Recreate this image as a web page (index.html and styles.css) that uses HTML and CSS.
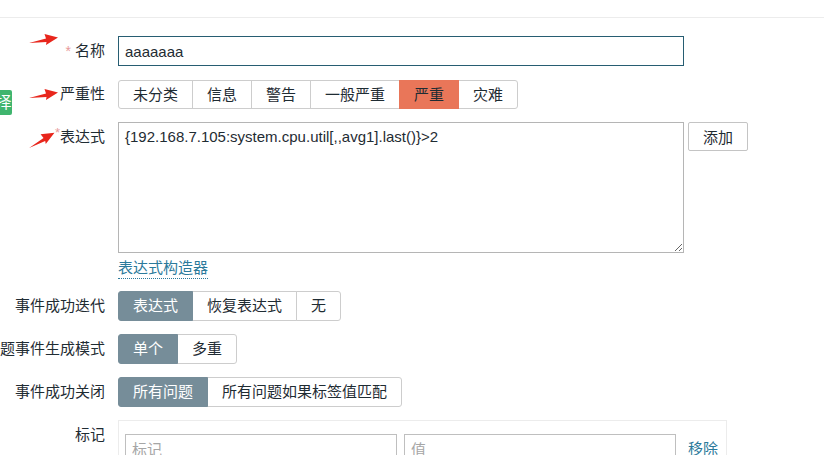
FILE: index.html
```html
<!DOCTYPE html>
<html lang="zh-CN">
<head>
  <meta charset="UTF-8" />
  <meta name="viewport" content="width=device-width, initial-scale=1" />
  <title>触发器</title>
  <link rel="stylesheet" href="styles.css">
</head>
<body>
  <div class="top-bar"></div>

  <!-- leftover sidebar tab peeking in from the left edge -->
  <span class="side-tab">择</span>

  <!-- red annotation arrows -->
  <svg class="arrow arrow-name" width="30" height="13" viewBox="0 0 30 13"><polygon points="0,10 17,5.5 15.5,1 29,4.5 17,12 17.5,9" fill="#e8261c"/></svg>
  <svg class="arrow arrow-severity" width="30" height="13" viewBox="0 0 30 13"><polygon points="0,10 17,5.5 15.5,1 29,4.5 17,12 17.5,9" fill="#e8261c"/></svg>
  <svg class="arrow arrow-expr" width="30" height="13" viewBox="0 0 30 13"><polygon points="0,10 17,5.5 15.5,1 29,4.5 17,12 17.5,9" fill="#e8261c"/></svg>

  <form class="trigger-form">
    <div class="form-row">
      <label class="label"><span class="required">*</span>&nbsp;名称</label>
      <div class="field">
        <input type="text" class="text-input name-input" value="aaaaaaa" />
      </div>
    </div>

    <div class="form-row">
      <label class="label">严重性</label>
      <div class="field">
        <div class="radio-group severity">
          <span class="radio">未分类</span>
          <span class="radio">信息</span>
          <span class="radio">警告</span>
          <span class="radio">一般严重</span>
          <span class="radio high">严重</span>
          <span class="radio">灾难</span>
        </div>
      </div>
    </div>

    <div class="form-row row-top">
      <label class="label"><span class="required up">*</span>表达式</label>
      <div class="field">
        <textarea class="expression">{192.168.7.105:system.cpu.util[,,avg1].last()}&gt;2</textarea>
        <button type="button" class="btn">添加</button>
      </div>
    </div>

    <div class="form-row link-row">
      <div class="label"></div>
      <div class="field">
        <a class="dotted-link">表达式构造器</a>
      </div>
    </div>

    <div class="form-row">
      <label class="label">事件成功迭代</label>
      <div class="field">
        <div class="radio-group">
          <span class="radio on">表达式</span>
          <span class="radio">恢复表达式</span>
          <span class="radio">无</span>
        </div>
      </div>
    </div>

    <div class="form-row">
      <label class="label">问题事件生成模式</label>
      <div class="field">
        <div class="radio-group">
          <span class="radio on">单个</span>
          <span class="radio">多重</span>
        </div>
      </div>
    </div>

    <div class="form-row">
      <label class="label">事件成功关闭</label>
      <div class="field">
        <div class="radio-group">
          <span class="radio on">所有问题</span>
          <span class="radio">所有问题如果标签值匹配</span>
        </div>
      </div>
    </div>

    <div class="form-row row-top">
      <label class="label">标记</label>
      <div class="field">
        <div class="tag-box">
          <input type="text" class="text-input tag-input" placeholder="标记" />
          <input type="text" class="text-input tag-input" placeholder="值" />
          <a class="link">移除</a>
        </div>
      </div>
    </div>
  </form>
</body>
</html>
```

FILE: styles.css
```css
body {
  margin: 0;
  background: #fff;
  color: #1f2c33;
  font-family: "Liberation Sans", "Noto Sans CJK SC", sans-serif;
  font-size: 15px;
  overflow: hidden;
}

.top-bar {
  height: 17px;
  border-bottom: 1px solid #ececec;
}

/* overlays */
.side-tab {
  position: absolute;
  left: -5px;
  top: 90px;
  width: 17px;
  height: 25px;
  background: #3fb56e;
  color: #fff;
  font-size: 16px;
  line-height: 25px;
  text-align: center;
  border-radius: 2px;
}

.arrow {
  position: absolute;
}

.arrow-name {
  left: 29px;
  top: 33px;
}

.arrow-severity {
  left: 29px;
  top: 88px;
}

.arrow-expr {
  left: 27px;
  top: 133px;
  transform: rotate(-20deg);
}

/* form layout */
.trigger-form {
  padding-top: 18px;
}

.form-row {
  display: flex;
  align-items: center;
  margin-bottom: 13px;
}

.row-top {
  align-items: flex-start;
}

.label {
  display: flex;
  justify-content: flex-end;
  align-items: baseline;
  width: 105px;
  flex-shrink: 0;
  padding-right: 13px;
  line-height: 30px;
  white-space: nowrap;
}

.label .required {
  color: #e89a9a;
  font-size: 14px;
}

.label .required.up {
  position: relative;
  top: -5px;
  font-size: 13px;
}

.field {
  display: flex;
  align-items: flex-start;
  gap: 4px;
}

/* inputs */
.text-input {
  box-sizing: border-box;
  height: 30px;
  padding: 0 6px;
  border: 1px solid #bfbfbf;
  font-family: inherit;
  font-size: 15px;
  color: #1f2c33;
  outline: none;
}

.text-input::placeholder {
  color: #a6a6a6;
}

.name-input {
  width: 566px;
  border-color: #275d72;
}

.expression {
  box-sizing: border-box;
  width: 566px;
  height: 131px;
  padding: 5px 6px;
  margin: 0;
  border: 1px solid #b5b5b5;
  font-family: inherit;
  font-size: 15px;
  color: #1f2c33;
  resize: both;
}

.btn {
  height: 29px;
  padding: 0 14px;
  border: 1px solid #c4c4c4;
  border-radius: 2px;
  background: #fff;
  font-family: inherit;
  font-size: 15px;
  color: #1f2c33;
}

/* segmented radio buttons */
.radio-group {
  display: inline-flex;
}

.radio {
  height: 30px;
  line-height: 28px;
  box-sizing: border-box;
  padding: 0 14px;
  border: 1px solid #cdcdcd;
  margin-left: -1px;
  background: #fff;
  white-space: nowrap;
}

.radio:first-child {
  margin-left: 0;
  border-radius: 3px 0 0 3px;
}

.radio:last-child {
  border-radius: 0 3px 3px 0;
}

.severity .radio {
  height: 29px;
  line-height: 27px;
}

.radio.high {
  background: #e97659;
  border-color: #e97659;
  position: relative;
}

.radio.on {
  background: #768d99;
  border-color: #768d99;
  color: #fff;
  position: relative;
}

/* links */
.link-row {
  margin-top: -8px;
  margin-bottom: 12px;
}

.link-row .label {
  line-height: 20px;
}

.dotted-link {
  color: #2b7a9b;
  line-height: 20px;
  border-bottom: 1px dotted #2b7a9b;
}

.link {
  color: #2b7a9b;
  line-height: 30px;
  margin-left: 5px;
}

/* tags */
.tag-box {
  display: flex;
  gap: 7px;
  width: 609px;
  box-sizing: border-box;
  padding: 13px 6px 10px;
  border: 1px solid #ececec;
}

.tag-input {
  width: 272px;
  height: 30px;
}
```
